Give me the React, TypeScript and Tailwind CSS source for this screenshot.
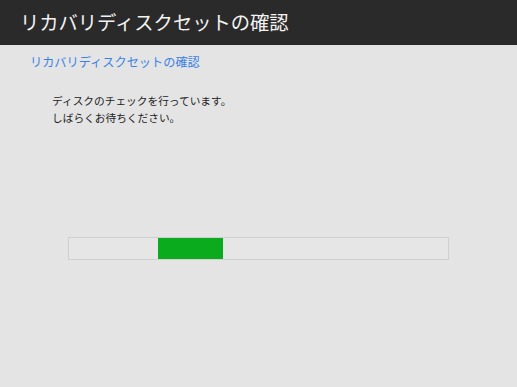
export default function App() {
  return (
    <div
      className="w-[517px] h-[387px] bg-[#e4e4e4] flex flex-col"
      style={{ fontFamily: '"Noto Sans CJK JP", "Noto Sans", sans-serif' }}
    >
      <div className="h-[45px] bg-[#2a2a2a] flex items-center pl-[20px]">
        <h1 className="text-[19.3px] text-[#f2f2f2] leading-none">
          リカバリディスクセットの確認
        </h1>
      </div>

      <div className="pl-[30px] pt-[9px]">
        <h2 className="text-[12.2px] text-[#3b82e6] leading-[16px]">リカバリディスクセットの確認</h2>
      </div>

      <div className="pl-[52px] pt-[22px] text-[10.7px] text-[#222] leading-[17px]">
        <p>ディスクのチェックを行っています。</p>
        <p>しばらくお待ちください。</p>
      </div>

      <div className="ml-[68px] mt-[111px] w-[381px] h-[23px] border border-[#cfcfcf] bg-[#e6e6e6] flex items-stretch">
        <div className="ml-[89px] w-[65px] bg-[#0aab1c]" />
      </div>
    </div>
  );
}
